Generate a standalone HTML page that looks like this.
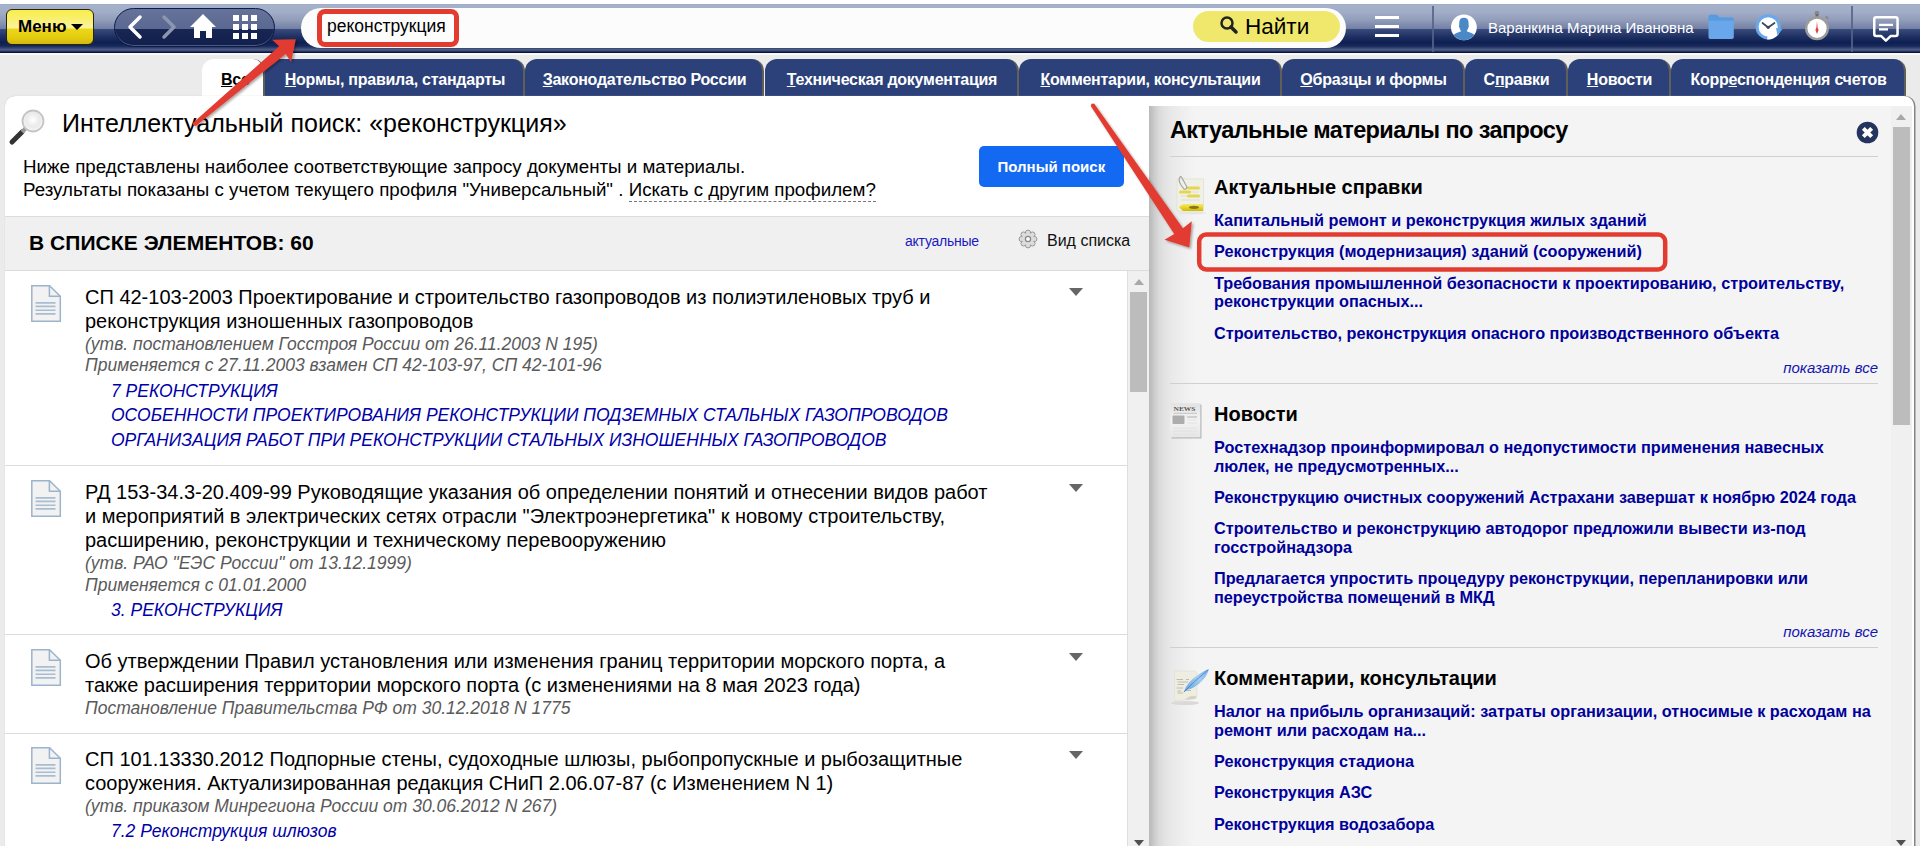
<!DOCTYPE html>
<html><head><meta charset="utf-8">
<style>
*{margin:0;padding:0;box-sizing:border-box}
html,body{width:1920px;height:846px;overflow:hidden;background:#ebebeb;font-family:"Liberation Sans",sans-serif;position:relative}
.abs{position:absolute}
.t{position:absolute;white-space:nowrap;line-height:1}
.tab{position:absolute;top:59px;height:37px;background:#2c4179;border-radius:12px 12px 0 0;border-right:2px solid #625f58}
.tabt{color:#fff;font-weight:bold;font-size:16px;letter-spacing:-0.25px;text-align:center;padding-left:2px}
.tabt u{text-decoration:underline;text-underline-offset:1px}
#hdr{position:absolute;left:0;top:4px;width:1920px;height:49px;background:linear-gradient(#9da8c3 0px,#a6b1cb 1px,#a2adc8 8px,#919db9 16px,#7d89ab 22px,#717ea2 25px,#3a4b7c 25px,#213365 32px,#0e2052 38.5px,#17275a 42px,#4b5b82 45.5px,#3a4a74 47px,#0a1440 48px,#0a1440 49px)}
</style></head><body>
<div class="abs" style="left:0;top:0;width:1920px;height:4px;background:#fff"></div>
<div id="hdr"></div>
<div class="abs" style="left:0;top:53px;width:1920px;height:1.5px;background:#f8f8f8"></div>
<!-- menu button -->
<div class="abs" style="left:6px;top:8.8px;width:88px;height:36.4px;border-radius:6px;border:1.6px solid #24240f;background:linear-gradient(#f8ee4a 0px,#f9f070 9px,#faf39c 18px,#ecd816 19px,#e3cb10 28px,#d4b80c 34px)"></div>
<div class="t" style="left:18px;top:17.6px;font-size:17px;font-weight:bold;color:#000">Меню</div>
<div class="abs" style="left:71px;top:24px;width:0;height:0;border-left:6px solid transparent;border-right:6px solid transparent;border-top:6px solid #000"></div>
<!-- nav pill -->
<div class="abs" style="left:114px;top:8px;width:161px;height:39px;border-radius:20px;border:1px solid #0c1a46;background:linear-gradient(#66739a 0px,#5a6790 20px,#182653 20px,#121f4c 38px);box-shadow:inset 0 -1px 0 #4a5a85"></div>
<svg class="abs" style="left:114px;top:8px" width="161" height="39" viewBox="0 0 161 39">
<path d="M26 9 L16 19 L26 29" fill="none" stroke="#fff" stroke-width="3.5" stroke-linecap="round" stroke-linejoin="round"/>
<path d="M50 9 L60 19 L50 29" fill="none" stroke="#8c96b0" stroke-width="3.5" stroke-linecap="round" stroke-linejoin="round"/>
<path d="M89 6 L76 19 L80 19 L80 30 L86 30 L86 23 L92 23 L92 30 L98 30 L98 19 L102 19 Z" fill="#fff"/>
<g fill="#fff"><rect x="119" y="7" width="6" height="6"/><rect x="128" y="7" width="6" height="6"/><rect x="137" y="7" width="6" height="6"/>
<rect x="119" y="16" width="6" height="6"/><rect x="128" y="16" width="6" height="6"/><rect x="137" y="16" width="6" height="6"/>
<rect x="119" y="25" width="6" height="6"/><rect x="128" y="25" width="6" height="6"/><rect x="137" y="25" width="6" height="6"/></g>
</svg>
<!-- search -->
<div class="abs" style="left:301px;top:7.5px;width:1045px;height:40px;border-radius:20px;background:#fcfcfc"></div>
<div class="abs" style="left:317px;top:9px;width:142px;height:38px;border-radius:8px;border:5px solid #e23b30"></div>
<div class="t" style="left:327px;top:17.6px;font-size:17.5px;color:#000">реконструкция</div>
<div class="abs" style="left:1193px;top:11.2px;width:147px;height:31.2px;border-radius:15.6px;background:#efe86c"></div>
<svg class="abs" style="left:1219px;top:15px" width="22" height="22" viewBox="0 0 22 22"><circle cx="8" cy="8" r="5.5" fill="none" stroke="#222" stroke-width="2.5"/><path d="M12 12 L17 17" stroke="#222" stroke-width="3.5" stroke-linecap="round"/></svg>
<div class="t" style="left:1245px;top:15.5px;font-size:22.5px;color:#000">Найти</div>
<!-- hamburger -->
<div class="abs" style="left:1375px;top:16px;width:24px;height:3px;background:#fff"></div>
<div class="abs" style="left:1375px;top:25px;width:24px;height:3px;background:#fff"></div>
<div class="abs" style="left:1375px;top:34px;width:24px;height:3px;background:#fff"></div>
<div class="abs" style="left:1432px;top:6px;width:1.5px;height:46px;background:#56628a;opacity:0.85"></div>
<div class="abs" style="left:1851px;top:6px;width:1.5px;height:46px;background:#56628a;opacity:0.85"></div>
<!-- avatar -->
<svg class="abs" style="left:1450px;top:14px" width="28" height="28" viewBox="0 0 28 28"><circle cx="13.9" cy="13.3" r="12.9" fill="#fff"/><clipPath id="cc"><circle cx="13.9" cy="13.3" r="12.9"/></clipPath><path clip-path="url(#cc)" fill="#4a88c6" d="M9.2 9 Q9.2 3.8 13.9 3.8 Q18.6 3.8 18.6 9 L18.6 11.5 Q19.2 12.2 18.4 13.5 Q17.6 16 16.6 17.2 Q22 18.5 27 22.5 L27 30 L1 30 L1 22.5 Q6 18.5 11.2 17.2 Q10.2 16 9.4 13.5 Q8.6 12.2 9.2 11.5 Z"/></svg>
<div class="t" style="left:1488px;top:20.3px;font-size:15px;color:#fff">Варанкина Марина Ивановна</div>
<!-- folder -->
<svg class="abs" style="left:1707px;top:13px" width="28" height="27" viewBox="0 0 28 27"><path d="M1.5 3.5 Q1.5 1.8 3.2 1.8 L10 1.8 L12.5 4.5 L25 4.5 Q26.8 4.5 26.8 6.3 L26.8 24.3 Q26.8 26 25 26 L3.2 26 Q1.5 26 1.5 24.3 Z" fill="#69a7ea"/><path d="M1.5 6.5 L26.8 6.5" stroke="#4d90da" stroke-width="1.6"/><path d="M1.5 3.5 Q1.5 1.8 3.2 1.8 L10 1.8 L12.5 4.5 L25 4.5 Q26.8 4.5 26.8 6.3 L26.8 7.3 L1.5 7.3 Z" fill="#5a9be0"/></svg>
<!-- clock -->
<svg class="abs" style="left:1753px;top:12px" width="32" height="30" viewBox="0 0 32 30">
<circle cx="15.2" cy="14.9" r="12.6" fill="#67a9ea"/>
<circle cx="15.2" cy="14.9" r="9.6" fill="#fff"/>
<clipPath id="ck"><circle cx="15.2" cy="14.9" r="12.6"/></clipPath><path d="M15.2 14.9 L28 21 L20 29 L14 29 Z" fill="#fff" clip-path="url(#ck)"/>
<path d="M23 16 L29.5 17 L24.5 23.5 Z" fill="#67a9ea"/>
<path d="M9.5 11 L15.2 15.5 L21.5 11" fill="none" stroke="#3e4852" stroke-width="1.7" stroke-linecap="round" stroke-linejoin="round"/>
<circle cx="15.2" cy="15.3" r="1.6" fill="#3e4852"/>
</svg>
<!-- stopwatch -->
<svg class="abs" style="left:1803px;top:10px" width="30" height="34" viewBox="0 0 30 34">
<rect x="11.8" y="1" width="4.4" height="4" rx="1" fill="#8a8a8a"/>
<rect x="12.6" y="4" width="2.8" height="3" fill="#6a6a6a"/>
<path d="M23.5 5.5 L26 8 L24.5 9.5 L22 7 Z" fill="#8a8a8a"/>
<circle cx="14" cy="18.3" r="12" fill="#9c9c9c"/>
<circle cx="14" cy="18.3" r="9.6" fill="#fff"/>
<path d="M14 11 L14.6 17.5 L15.6 20 L14 24 L12.4 20 L13.4 17.5 Z" fill="#e0443c"/>
</svg>
<!-- chat -->
<svg class="abs" style="left:1872px;top:14px" width="28" height="30" viewBox="0 0 28 30"><path d="M4.25 3.15 H23.55 Q25.55 3.15 25.55 5.15 V19.95 Q25.55 21.95 23.55 21.95 H18.8 L13.9 26.6 L9 21.95 H4.25 Q2.25 21.95 2.25 19.95 V5.15 Q2.25 3.15 4.25 3.15 Z" fill="none" stroke="#fff" stroke-width="2.5" stroke-linejoin="round"/><path d="M7 10.8 H21 M7 15.3 H16" stroke="#fff" stroke-width="2.2"/></svg>
<div class="abs" style="left:202px;top:59px;width:63px;height:37px;background:#fff;border-radius:12px 12px 0 0;border-right:2px solid #625f58"></div>
<div class="t" style="left:221px;top:72.36px;font-size:16px;color:#000;font-weight:bold;font-style:normal;letter-spacing:-0.25px;text-underline-offset:1px"><u>В</u>се</div>
<div class="tab" style="left:265px;width:260px"></div>
<div class="t tabt" style="left:265px;width:258px;top:72.36px"><u>Н</u>ормы, правила, стандарты</div>
<div class="tab" style="left:525px;width:239px"></div>
<div class="t tabt" style="left:525px;width:237px;top:72.36px"><u>З</u>аконодательство России</div>
<div class="tab" style="left:765px;width:254px"></div>
<div class="t tabt" style="left:765px;width:252px;top:72.36px"><u>Т</u>ехническая документация</div>
<div class="tab" style="left:1019px;width:263px"></div>
<div class="t tabt" style="left:1019px;width:261px;top:72.36px"><u>К</u>омментарии, консультации</div>
<div class="tab" style="left:1282px;width:183px"></div>
<div class="t tabt" style="left:1282px;width:181px;top:72.36px"><u>О</u>бразцы и формы</div>
<div class="tab" style="left:1465px;width:103px"></div>
<div class="t tabt" style="left:1465px;width:101px;top:72.36px">С<u>п</u>равки</div>
<div class="tab" style="left:1568px;width:103px"></div>
<div class="t tabt" style="left:1568px;width:101px;top:72.36px"><u>Н</u>овости</div>
<div class="tab" style="left:1671px;width:235px"></div>
<div class="t tabt" style="left:1671px;width:233px;top:72.36px">Корр<u>е</u>спонденция счетов</div>
<div class="abs" style="left:5px;top:96px;width:1908.5px;height:760px;background:#fff;border-radius:10px 10px 0 0;box-shadow:1.5px 0 0 #858585, 0 0 1px #bbb"></div>
<svg class="abs" style="left:8px;top:106px" width="40" height="40" viewBox="0 0 40 40">
<defs><radialGradient id="lg" cx="50%" cy="45%" r="55%"><stop offset="0" stop-color="#fff"/><stop offset="0.6" stop-color="#eaeaea"/><stop offset="1" stop-color="#f8f8f8"/></radialGradient></defs>
<line x1="4" y1="36" x2="14" y2="26" stroke="#333" stroke-width="5" stroke-linecap="round"/>
<line x1="14" y1="26" x2="18" y2="22" stroke="#999" stroke-width="4"/>
<circle cx="25" cy="15" r="10.5" fill="url(#lg)" stroke="#c4c4c4" stroke-width="1.8"/>
</svg>
<div class="t" style="left:62px;top:110.74px;font-size:25px;color:#000;font-weight:normal;font-style:normal;">Интеллектуальный поиск: «реконструкция»</div>
<div class="t" style="left:23px;top:157.53px;font-size:18.75px;color:#000;font-weight:normal;font-style:normal;">Ниже представлены наиболее соответствующие запросу документы и материалы.</div>
<div class="t" style="left:23px;top:180.83px;font-size:18.75px;color:#000;font-weight:normal;font-style:normal;">Результаты показаны с учетом текущего профиля "Универсальный" . <span style="border-bottom:1px dashed #777;padding-bottom:1px">Искать с другим профилем?</span></div>
<div class="abs" style="left:979px;top:146px;width:145px;height:41px;background:#1469f2;border-radius:5px"></div>
<div class="t" style="left:997.5px;top:159.40px;font-size:15px;color:#fff;font-weight:bold;font-style:normal;">Полный поиск</div>
<div class="abs" style="left:5px;top:216px;width:1144px;height:55px;background:#f0f0f0;border-top:1px solid #dcdcdc;border-bottom:1px solid #dcdcdc"></div>
<div class="t" style="left:29px;top:231.72px;font-size:21px;color:#000;font-weight:bold;font-style:normal;letter-spacing:0.05px">В СПИСКЕ ЭЛЕМЕНТОВ: 60</div>
<div class="t" style="left:905px;top:234.05px;font-size:14px;color:#1a1ac0;font-weight:normal;font-style:normal;letter-spacing:-0.25px">актуальные</div>
<svg class="abs" style="left:1018px;top:229px" width="20" height="20" viewBox="0 0 20 20">
<g fill="#d4d4d4" stroke="#8e8e8e" stroke-width="0.9"><circle cx="16.30" cy="10.00" r="2.6"/><circle cx="14.45" cy="14.45" r="2.6"/><circle cx="10.00" cy="16.30" r="2.6"/><circle cx="5.55" cy="14.45" r="2.6"/><circle cx="3.70" cy="10.00" r="2.6"/><circle cx="5.55" cy="5.55" r="2.6"/><circle cx="10.00" cy="3.70" r="2.6"/><circle cx="14.45" cy="5.55" r="2.6"/><circle cx="10" cy="10" r="6.3"/></g>
<g fill="#dcdcdc"><circle cx="16.30" cy="10.00" r="1.9"/><circle cx="14.45" cy="14.45" r="1.9"/><circle cx="10.00" cy="16.30" r="1.9"/><circle cx="5.55" cy="14.45" r="1.9"/><circle cx="3.70" cy="10.00" r="1.9"/><circle cx="5.55" cy="5.55" r="1.9"/><circle cx="10.00" cy="3.70" r="1.9"/><circle cx="14.45" cy="5.55" r="1.9"/><circle cx="10" cy="10" r="5.9"/></g>
<circle cx="10" cy="10" r="2.6" fill="#fafafa" stroke="#858585" stroke-width="1.2"/>
</svg>
<div class="t" style="left:1047px;top:233.16px;font-size:16px;color:#111;font-weight:normal;font-style:normal;">Вид списка</div>
<div class="abs" style="left:1127px;top:271px;width:22px;height:580px;background:#f0f0f0;border-left:1px solid #dedede"></div>
<div class="abs" style="left:1134px;top:279px;width:0;height:0;border-left:5px solid transparent;border-right:5px solid transparent;border-bottom:6px solid #a8a8a8"></div>
<div class="abs" style="left:1130px;top:292px;width:17px;height:100px;background:#bcbcbc"></div>
<div class="abs" style="left:1134px;top:840px;width:0;height:0;border-left:5px solid transparent;border-right:5px solid transparent;border-top:6px solid #505050"></div>
<svg class="abs" style="left:30px;top:284px" width="32" height="40" viewBox="0 0 32 40">
<path d="M1.8 1.8 L19.6 1.8 L30.3 12.2 L30.3 37.2 L1.8 37.2 Z" fill="#f2f2f2" stroke="#9cb4cb" stroke-width="1.5"/>
<path d="M19.4 1.8 L19.4 12.2 L30.3 12.2" fill="none" stroke="#9cb4cb" stroke-width="1.5"/>
<path d="M5.5 18.9 H25.5 M5.5 22.4 H25.5 M5.5 26.3 H25.5 M5.5 29.9 H25.5" stroke="#a8bdd1" stroke-width="1.6"/>
</svg>
<div class="abs" style="left:1069px;top:288px;width:0;height:0;border-left:7px solid transparent;border-right:7px solid transparent;border-top:8px solid #666"></div>
<div class="t" style="left:85px;top:287.17px;font-size:20px;color:#000;font-weight:normal;font-style:normal;">СП 42-103-2003 Проектирование и строительство газопроводов из полиэтиленовых труб и</div>
<div class="t" style="left:85px;top:310.57px;font-size:20px;color:#000;font-weight:normal;font-style:normal;">реконструкция изношенных газопроводов</div>
<div class="t" style="left:85px;top:335.69px;font-size:17.5px;color:#5a5a5a;font-weight:normal;font-style:italic;">(утв. постановлением Госстроя России от 26.11.2003 N 195)</div>
<div class="t" style="left:85px;top:357.39px;font-size:17.5px;color:#5a5a5a;font-weight:normal;font-style:italic;">Применяется с 27.11.2003 взамен СП 42-103-97, СП 42-101-96</div>
<div class="t" style="left:111px;top:382.89px;font-size:17.5px;color:#0000a8;font-weight:normal;font-style:italic;">7 РЕКОНСТРУКЦИЯ</div>
<div class="t" style="left:111px;top:407.49px;font-size:17.5px;color:#0000a8;font-weight:normal;font-style:italic;">ОСОБЕННОСТИ ПРОЕКТИРОВАНИЯ РЕКОНСТРУКЦИИ ПОДЗЕМНЫХ СТАЛЬНЫХ ГАЗОПРОВОДОВ</div>
<div class="t" style="left:111px;top:432.09px;font-size:17.5px;color:#0000a8;font-weight:normal;font-style:italic;">ОРГАНИЗАЦИЯ РАБОТ ПРИ РЕКОНСТРУКЦИИ СТАЛЬНЫХ ИЗНОШЕННЫХ ГАЗОПРОВОДОВ</div>
<div class="abs" style="left:5px;top:465px;width:1122px;height:1px;background:#dcdcdc"></div>
<svg class="abs" style="left:30px;top:479px" width="32" height="40" viewBox="0 0 32 40">
<path d="M1.8 1.8 L19.6 1.8 L30.3 12.2 L30.3 37.2 L1.8 37.2 Z" fill="#f2f2f2" stroke="#9cb4cb" stroke-width="1.5"/>
<path d="M19.4 1.8 L19.4 12.2 L30.3 12.2" fill="none" stroke="#9cb4cb" stroke-width="1.5"/>
<path d="M5.5 18.9 H25.5 M5.5 22.4 H25.5 M5.5 26.3 H25.5 M5.5 29.9 H25.5" stroke="#a8bdd1" stroke-width="1.6"/>
</svg>
<div class="abs" style="left:1069px;top:484px;width:0;height:0;border-left:7px solid transparent;border-right:7px solid transparent;border-top:8px solid #666"></div>
<div class="t" style="left:85px;top:481.97px;font-size:20px;color:#000;font-weight:normal;font-style:normal;">РД 153-34.3-20.409-99 Руководящие указания об определении понятий и отнесении видов работ</div>
<div class="t" style="left:85px;top:506.27px;font-size:20px;color:#000;font-weight:normal;font-style:normal;">и мероприятий в электрических сетях отрасли "Электроэнергетика" к новому строительству,</div>
<div class="t" style="left:85px;top:530.07px;font-size:20px;color:#000;font-weight:normal;font-style:normal;">расширению, реконструкции и техническому перевооружению</div>
<div class="t" style="left:85px;top:555.49px;font-size:17.5px;color:#5a5a5a;font-weight:normal;font-style:italic;">(утв. РАО "ЕЭС России" от 13.12.1999)</div>
<div class="t" style="left:85px;top:576.69px;font-size:17.5px;color:#5a5a5a;font-weight:normal;font-style:italic;">Применяется с 01.01.2000</div>
<div class="t" style="left:111px;top:601.69px;font-size:17.5px;color:#0000a8;font-weight:normal;font-style:italic;">3. РЕКОНСТРУКЦИЯ</div>
<div class="abs" style="left:5px;top:634px;width:1122px;height:1px;background:#dcdcdc"></div>
<svg class="abs" style="left:30px;top:648px" width="32" height="40" viewBox="0 0 32 40">
<path d="M1.8 1.8 L19.6 1.8 L30.3 12.2 L30.3 37.2 L1.8 37.2 Z" fill="#f2f2f2" stroke="#9cb4cb" stroke-width="1.5"/>
<path d="M19.4 1.8 L19.4 12.2 L30.3 12.2" fill="none" stroke="#9cb4cb" stroke-width="1.5"/>
<path d="M5.5 18.9 H25.5 M5.5 22.4 H25.5 M5.5 26.3 H25.5 M5.5 29.9 H25.5" stroke="#a8bdd1" stroke-width="1.6"/>
</svg>
<div class="abs" style="left:1069px;top:653px;width:0;height:0;border-left:7px solid transparent;border-right:7px solid transparent;border-top:8px solid #666"></div>
<div class="t" style="left:85px;top:650.97px;font-size:20px;color:#000;font-weight:normal;font-style:normal;">Об утверждении Правил установления или изменения границ территории морского порта, а</div>
<div class="t" style="left:85px;top:674.87px;font-size:20px;color:#000;font-weight:normal;font-style:normal;">также расширения территории морского порта (с изменениями на 8 мая 2023 года)</div>
<div class="t" style="left:85px;top:699.89px;font-size:17.5px;color:#5a5a5a;font-weight:normal;font-style:italic;">Постановление Правительства РФ от 30.12.2018 N 1775</div>
<div class="abs" style="left:5px;top:733px;width:1122px;height:1px;background:#dcdcdc"></div>
<svg class="abs" style="left:30px;top:746px" width="32" height="40" viewBox="0 0 32 40">
<path d="M1.8 1.8 L19.6 1.8 L30.3 12.2 L30.3 37.2 L1.8 37.2 Z" fill="#f2f2f2" stroke="#9cb4cb" stroke-width="1.5"/>
<path d="M19.4 1.8 L19.4 12.2 L30.3 12.2" fill="none" stroke="#9cb4cb" stroke-width="1.5"/>
<path d="M5.5 18.9 H25.5 M5.5 22.4 H25.5 M5.5 26.3 H25.5 M5.5 29.9 H25.5" stroke="#a8bdd1" stroke-width="1.6"/>
</svg>
<div class="abs" style="left:1069px;top:751px;width:0;height:0;border-left:7px solid transparent;border-right:7px solid transparent;border-top:8px solid #666"></div>
<div class="t" style="left:85px;top:749.17px;font-size:20px;color:#000;font-weight:normal;font-style:normal;">СП 101.13330.2012 Подпорные стены, судоходные шлюзы, рыбопропускные и рыбозащитные</div>
<div class="t" style="left:85px;top:772.57px;font-size:20px;color:#000;font-weight:normal;font-style:normal;">сооружения. Актуализированная редакция СНиП 2.06.07-87 (с Изменением N 1)</div>
<div class="t" style="left:85px;top:798.29px;font-size:17.5px;color:#5a5a5a;font-weight:normal;font-style:italic;">(утв. приказом Минрегиона России от 30.06.2012 N 267)</div>
<div class="t" style="left:111px;top:822.59px;font-size:17.5px;color:#0000a8;font-weight:normal;font-style:italic;">7.2 Реконструкция шлюзов</div>
<div class="abs" style="left:1149px;top:106px;width:763px;height:745px;background:linear-gradient(90deg,#b9b9b9 0px,#c2c2c2 3px,#cbcbcb 5px,#dadada 10px,#e3e3e3 16px,#e9e9e9 23px,#f0f0f0 37px,#f4f4f4 46px,#f4f4f4 100%)"></div>
<div class="abs" style="left:1891px;top:106px;width:21px;height:745px;background:#f0f0f0"></div>
<div class="abs" style="left:1896px;top:114px;width:0;height:0;border-left:5px solid transparent;border-right:5px solid transparent;border-bottom:6px solid #a8a8a8"></div>
<div class="abs" style="left:1893px;top:127px;width:17px;height:298px;background:#bcbcbc"></div>
<div class="abs" style="left:1896px;top:840px;width:0;height:0;border-left:5px solid transparent;border-right:5px solid transparent;border-top:6px solid #505050"></div>
<div class="t" style="left:1170px;top:118.71px;font-size:23.5px;color:#000;font-weight:bold;font-style:normal;letter-spacing:-0.6px">Актуальные материалы по запросу</div>
<svg class="abs" style="left:1856px;top:121px" width="23" height="23" viewBox="0 0 23 23"><circle cx="11.5" cy="11.5" r="10.8" fill="#24345f"/>
<path d="M7.3 7.3 L15.7 15.7 M15.7 7.3 L7.3 15.7" stroke="#fff" stroke-width="4"/></svg>
<div class="abs" style="left:1170px;top:156px;width:708px;height:1px;background:#d0d0d0"></div>
<div class="t" style="left:1214px;top:176.77px;font-size:20px;color:#000;font-weight:bold;font-style:normal;">Актуальные справки</div>
<div class="t" style="left:1214px;top:211.94px;font-size:16.25px;color:#00009a;font-weight:bold;font-style:normal;">Капитальный ремонт и реконструкция жилых зданий</div>
<div class="t" style="left:1214px;top:242.54px;font-size:16.25px;color:#00009a;font-weight:bold;font-style:normal;">Реконструкция (модернизация) зданий (сооружений)</div>
<div class="t" style="left:1214px;top:275.14px;font-size:16.25px;color:#00009a;font-weight:bold;font-style:normal;">Требования промышленной безопасности к проектированию, строительству,</div>
<div class="t" style="left:1214px;top:293.14px;font-size:16.25px;color:#00009a;font-weight:bold;font-style:normal;">реконструкции опасных...</div>
<div class="t" style="left:1214px;top:324.54px;font-size:16.25px;color:#00009a;font-weight:bold;font-style:normal;">Строительство, реконструкция опасного производственного объекта</div>
<div class="t" style="right:42px;top:359.70px;font-size:15px;color:#1414b0;font-style:italic">показать все</div>
<div class="abs" style="left:1170px;top:383px;width:708px;height:1px;background:#d0d0d0"></div>
<div class="t" style="left:1214px;top:403.77px;font-size:20px;color:#000;font-weight:bold;font-style:normal;">Новости</div>
<div class="t" style="left:1214px;top:438.94px;font-size:16.25px;color:#00009a;font-weight:bold;font-style:normal;">Ростехнадзор проинформировал о недопустимости применения навесных</div>
<div class="t" style="left:1214px;top:457.64px;font-size:16.25px;color:#00009a;font-weight:bold;font-style:normal;">люлек, не предусмотренных...</div>
<div class="t" style="left:1214px;top:488.94px;font-size:16.25px;color:#00009a;font-weight:bold;font-style:normal;">Реконструкцию очистных сооружений Астрахани завершат к ноябрю 2024 года</div>
<div class="t" style="left:1214px;top:520.14px;font-size:16.25px;color:#00009a;font-weight:bold;font-style:normal;">Строительство и реконструкцию автодорог предложили вывести из-под</div>
<div class="t" style="left:1214px;top:538.84px;font-size:16.25px;color:#00009a;font-weight:bold;font-style:normal;">госстройнадзора</div>
<div class="t" style="left:1214px;top:570.14px;font-size:16.25px;color:#00009a;font-weight:bold;font-style:normal;">Предлагается упростить процедуру реконструкции, перепланировки или</div>
<div class="t" style="left:1214px;top:588.84px;font-size:16.25px;color:#00009a;font-weight:bold;font-style:normal;">переустройства помещений в МКД</div>
<div class="t" style="right:42px;top:623.90px;font-size:15px;color:#1414b0;font-style:italic">показать все</div>
<div class="abs" style="left:1170px;top:647px;width:708px;height:1px;background:#d0d0d0"></div>
<div class="t" style="left:1214px;top:667.77px;font-size:20px;color:#000;font-weight:bold;font-style:normal;">Комментарии, консультации</div>
<div class="t" style="left:1214px;top:702.94px;font-size:16.25px;color:#00009a;font-weight:bold;font-style:normal;">Налог на прибыль организаций: затраты организации, относимые к расходам на</div>
<div class="t" style="left:1214px;top:722.04px;font-size:16.25px;color:#00009a;font-weight:bold;font-style:normal;">ремонт или расходам на...</div>
<div class="t" style="left:1214px;top:752.74px;font-size:16.25px;color:#00009a;font-weight:bold;font-style:normal;">Реконструкция стадиона</div>
<div class="t" style="left:1214px;top:784.14px;font-size:16.25px;color:#00009a;font-weight:bold;font-style:normal;">Реконструкция АЗС</div>
<div class="t" style="left:1214px;top:815.74px;font-size:16.25px;color:#00009a;font-weight:bold;font-style:normal;">Реконструкция водозабора</div>
<svg class="abs" style="left:1165px;top:168px" width="50" height="50" viewBox="0 0 50 50">
<defs><linearGradient id="mk" x1="0" y1="0" x2="0" y2="1"><stop offset="0" stop-color="#f4ea70"/><stop offset="0.5" stop-color="#e8d620"/><stop offset="1" stop-color="#cdb80a"/></linearGradient></defs>
<rect x="12" y="11" width="26.5" height="32" fill="#f1f0e6" stroke="#e2e0d4" stroke-width="0.8"/>
<path d="M16 24 H33 M16 28 H33 M16 32 H35" stroke="#dcdad0" stroke-width="0.8"/>
<rect x="22" y="18.5" width="13" height="3" rx="1.5" fill="#e4d64e"/>
<rect x="14" y="22.5" width="12" height="3" rx="1.5" fill="#e4d64e"/>
<rect x="22" y="26.5" width="13" height="3" rx="1.5" fill="#e4d64e"/>
<path d="M15 9 Q13 12 16 17 L19 21 Q21 22 22 19 L17 10 Q16 8 15 9 Z" fill="none" stroke="#a0a0a0" stroke-width="1.1"/>
<path d="M14 39 L18 36 L38 36 L38 43 L18 43 Z" fill="url(#mk)"/>
<ellipse cx="29" cy="39.3" rx="5" ry="1.6" fill="#5a5020" opacity="0.7"/>
<ellipse cx="27" cy="45" rx="14" ry="1.5" fill="#e6e6e6"/>
</svg>
<svg class="abs" style="left:1165px;top:398px" width="50" height="50" viewBox="0 0 50 50">
<defs><linearGradient id="nw" x1="0" y1="0" x2="0" y2="1"><stop offset="0" stop-color="#e2e2e2"/><stop offset="0.5" stop-color="#f3f3f3"/><stop offset="1" stop-color="#e6e6e6"/></linearGradient></defs>
<rect x="6.5" y="6.5" width="30" height="34" fill="#b8b8b8"/>
<rect x="5.3" y="5.3" width="30" height="34" fill="url(#nw)"/>
<text x="8.5" y="12.8" font-size="6.5" font-family="Liberation Serif" font-weight="bold" fill="#555" textLength="22" lengthAdjust="spacingAndGlyphs">NEWS</text>
<path d="M8.5 15.3 H32" stroke="#aaa" stroke-width="0.6"/>
<rect x="7.5" y="17.5" width="12" height="8.5" rx="1" fill="#adadad"/>
<path d="M22 19 H32" stroke="#a8a8a8" stroke-width="0.9"/>
<path d="M22 22 H32 M22 25 H32 M8 30 H32 M8 33 H32 M8 36 H32" stroke="#e0e0e0" stroke-width="0.8"/>
</svg>
<svg class="abs" style="left:1165px;top:660px" width="50" height="50" viewBox="0 0 50 50">
<defs><linearGradient id="fe" x1="0" y1="1" x2="1" y2="0"><stop offset="0" stop-color="#5f9fe0"/><stop offset="0.6" stop-color="#a2ccf0"/><stop offset="1" stop-color="#7ab2e8"/></linearGradient></defs>
<ellipse cx="20" cy="43" rx="14" ry="2" fill="#d9d9d9"/>
<path d="M9.5 11.5 Q9 11 10 11 L30.5 11 L32 13 L32 37 Q26 34 20 40 L9.5 40.5 Z" fill="#eeede2" stroke="#e0ded2" stroke-width="0.6"/>
<path d="M20 40 Q26 34 32 37 L30 39 Z" fill="#d4d2c0"/>
<path d="M11.5 19.5 H18 M21 19.5 H24 M12.5 22 H23 M12.5 24.5 H19 M11.5 28 H18 M12.5 31 H16 M20 30.5 H26 M12.5 33 H18" stroke="#b9b7a6" stroke-width="0.9"/>
<path d="M18.5 32.5 Q22 22 33 15 Q40 10 44 9 Q42 16 37 21 Q30 28 23 29.5 Q20 31 18.5 32.5 Z" fill="url(#fe)"/>
<path d="M19 32 Q28 22 43 10" fill="none" stroke="#2d6fbf" stroke-width="0.6"/>
</svg>
<svg class="abs" style="left:0;top:0;overflow:visible" width="1920" height="846">
<defs><filter id="sh" x="-20%" y="-20%" width="140%" height="140%"><feDropShadow dx="1.5" dy="1.5" stdDeviation="1" flood-color="#000" flood-opacity="0.35"/></filter></defs>
<g filter="url(#sh)" fill="#e23b30">
<path d="M193.64 122.2 L279.2 46.3 L272.1 39.75 L295.8 39.2 L291.05 61.9 L285.7 53.9 L196.36 125.4 Z"/>
<circle cx="195" cy="123.8" r="2.1"/>
<path d="M1091.27 106.79 L1174.2 234.1 L1164.5 239.7 L1189.3 247.5 L1191.8 221.2 L1182.9 228.2 L1094.73 104.41 Z"/>
<circle cx="1093" cy="105.6" r="2.1"/>
</g>
<rect x="1199.2" y="234.5" width="466" height="35" rx="7" fill="none" stroke="#e23b30" stroke-width="4.5"/>
</svg>
</body></html>
